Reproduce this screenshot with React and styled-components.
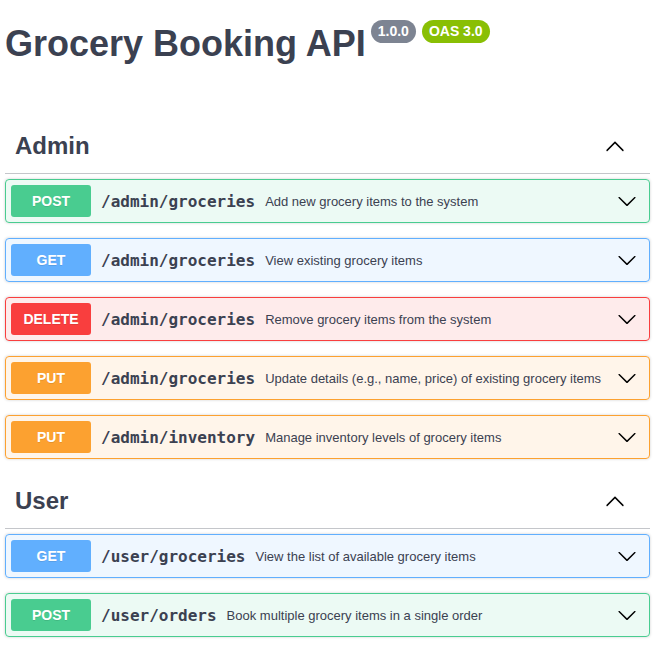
import React from 'react';
import styled, { createGlobalStyle } from 'styled-components';

const methods = {
  post: { color: '#49cc90', bg: 'rgba(73, 204, 144, 0.1)' },
  get: { color: '#61affe', bg: 'rgba(97, 175, 254, 0.1)' },
  delete: { color: '#f93e3e', bg: 'rgba(249, 62, 62, 0.1)' },
  put: { color: '#fca130', bg: 'rgba(252, 161, 48, 0.1)' },
};

const sections = [
  {
    name: 'Admin',
    ops: [
      { method: 'post', path: '/admin/groceries', summary: 'Add new grocery items to the system' },
      { method: 'get', path: '/admin/groceries', summary: 'View existing grocery items' },
      { method: 'delete', path: '/admin/groceries', summary: 'Remove grocery items from the system' },
      { method: 'put', path: '/admin/groceries', summary: 'Update details (e.g., name, price) of existing grocery items' },
      { method: 'put', path: '/admin/inventory', summary: 'Manage inventory levels of grocery items' },
    ],
  },
  {
    name: 'User',
    ops: [
      { method: 'get', path: '/user/groceries', summary: 'View the list of available grocery items' },
      { method: 'post', path: '/user/orders', summary: 'Book multiple grocery items in a single order' },
    ],
  },
];

const GlobalStyle = createGlobalStyle`
  body {
    margin: 0;
    background: #fff;
    font-family: "Liberation Sans", Arial, sans-serif;
    color: #3b4151;
  }
`;

const Wrapper = styled.div`
  padding: 0 7px 20px 5px;
`;

const Info = styled.div`
  display: flex;
  align-items: flex-start;
  padding-top: 20px;
  margin-bottom: 55px;
`;

const Title = styled.h2`
  margin: 3px 0 0;
  font-size: 36px;
  line-height: 41px;
  font-weight: 700;
  color: #3b4151;
`;

const Badges = styled.div`
  display: flex;
  gap: 6px;
  margin-left: 5px;
`;

const Badge = styled.span`
  display: inline-block;
  padding: 3px 7px;
  border-radius: 57px;
  background: ${(p) => p.$bg};
  color: #fff;
  font-size: 14px;
  line-height: 17px;
  font-weight: 700;
`;

const TagHeader = styled.div`
  display: flex;
  align-items: center;
  justify-content: space-between;
  padding: 10px 25px 10px 10px;
  margin-bottom: 5px;
  border-bottom: 1px solid rgba(59, 65, 81, 0.3);
`;

const TagName = styled.h3`
  margin: 0;
  font-size: 24px;
  line-height: 34px;
  font-weight: 700;
  color: #3b4151;
`;

const Block = styled.div`
  display: flex;
  align-items: center;
  padding: 5px 12px 5px 5px;
  margin-bottom: 15px;
  border: 1px solid ${(p) => p.$color};
  border-radius: 4px;
  background: ${(p) => p.$bg};
  box-shadow: 0 0 3px rgba(0, 0, 0, 0.19);
`;

const Method = styled.span`
  flex: none;
  width: 80px;
  height: 32px;
  display: flex;
  align-items: center;
  justify-content: center;
  border-radius: 3px;
  background: ${(p) => p.$color};
  color: #fff;
  font-size: 14px;
  font-weight: 700;
  text-shadow: 0 1px 0 rgba(0, 0, 0, 0.1);
`;

const Path = styled.span`
  padding: 0 10px;
  font-family: "DejaVu Sans Mono", "Liberation Mono", monospace;
  font-size: 16px;
  font-weight: 700;
  color: #3b4151;
`;

const Summary = styled.span`
  flex: 1;
  font-size: 13px;
  color: #3b4151;
`;

const Arrow = styled.svg`
  flex: none;
  width: 20px;
  height: 20px;
  fill: #000;
`;

const ArrowUp = () => (
  <Arrow viewBox="0 0 20 20">
    <path d="M17.418 14.908c.287.294.752.294 1.039 0 .287-.295.287-.771 0-1.066l-7.934-8.131c-.287-.294-.751-.294-1.039 0l-7.934 8.131c-.287.295-.287.771 0 1.066.287.294.752.294 1.039 0L10 7.5l7.418 7.408z" />
  </Arrow>
);

const ArrowDown = () => (
  <Arrow viewBox="0 0 20 20">
    <path d="M17.418 6.109c.272-.268.709-.268.979 0s.271.701 0 .969l-7.908 7.83c-.27.268-.707.268-.979 0l-7.908-7.83c-.27-.268-.27-.701 0-.969.271-.268.709-.268.979 0L10 13.25l7.418-7.141z" />
  </Arrow>
);

const Operation = ({ method, path, summary }) => {
  const m = methods[method];
  return (
    <Block $color={m.color} $bg={m.bg}>
      <Method $color={m.color}>{method.toUpperCase()}</Method>
      <Path>{path}</Path>
      <Summary>{summary}</Summary>
      <ArrowDown />
    </Block>
  );
};

export default function App() {
  return (
    <Wrapper>
      <GlobalStyle />
      <Info>
        <Title>Grocery Booking API</Title>
        <Badges>
          <Badge $bg="#7d8492">1.0.0</Badge>
          <Badge $bg="#89bf04">OAS 3.0</Badge>
        </Badges>
      </Info>
      {sections.map((s) => (
        <section key={s.name}>
          <TagHeader>
            <TagName>{s.name}</TagName>
            <ArrowUp />
          </TagHeader>
          {s.ops.map((op, i) => (
            <Operation key={i} {...op} />
          ))}
        </section>
      ))}
    </Wrapper>
  );
}
